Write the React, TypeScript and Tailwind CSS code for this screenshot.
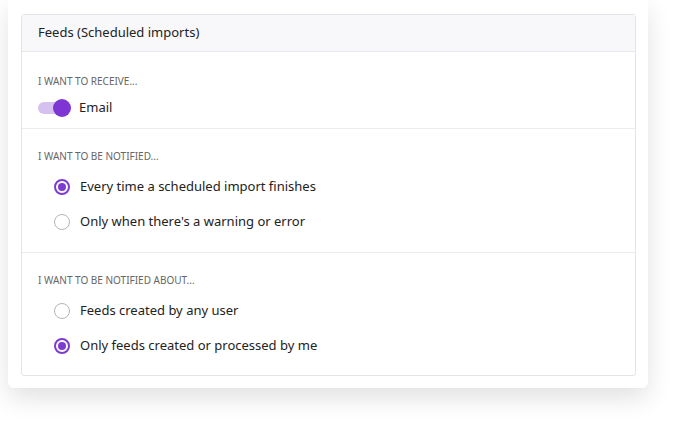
import React from 'react';

function Radio({ checked, label }: { checked: boolean; label: string }) {
  return (
    <div className="flex items-center h-[35px] pl-[16px]">
      {checked ? (
        <span className="w-[16px] h-[16px] rounded-full border-2 border-[#7e3bd0] flex items-center justify-center">
          <span className="w-[8px] h-[8px] rounded-full bg-[#7e3bd0]" />
        </span>
      ) : (
        <span className="w-[16px] h-[16px] rounded-full border border-[#b5b5b5]" />
      )}
      <span className="ml-[10px] text-[13px] text-[#222]">{label}</span>
    </div>
  );
}

export default function App() {
  return (
    <div className="w-[688px] h-[421px] bg-white relative" style={{ fontFamily: '"Noto Sans", sans-serif' }}>
      <div className="absolute left-[8px] top-0 w-[640px] h-[388px] bg-white shadow-[0_10px_25px_rgba(0,0,0,0.12)] rounded-b-md" />
      <div className="absolute left-[21px] top-[14px] w-[615px] border border-[#e4e4e8] rounded-[3px] bg-white">
        <div className="h-[37px] bg-[#f8f8fa] border-b border-[#e8e8ec] flex items-center px-[16px] text-[13px] text-[#222]">
          Feeds (Scheduled imports)
        </div>
        <div className="h-[77px] border-b border-[#ececef] px-[16px] pt-[24px]">
          <div className="text-[10px] text-[#666] uppercase leading-none">I want to receive...</div>
          <div className="flex items-center mt-[12px]">
            <span className="relative w-[33px] h-[18px] flex items-center">
              <span className="absolute left-0 w-[28px] h-[12px] rounded-full bg-[#d6c0ef]" />
              <span className="absolute right-0 w-[18px] h-[18px] rounded-full bg-[#7e35d3]" />
            </span>
            <span className="ml-[8px] text-[13px] text-[#222]">Email</span>
          </div>
        </div>
        <div className="h-[124px] border-b border-[#ececef] px-[16px] pt-[22px]">
          <div className="text-[10px] text-[#666] uppercase leading-none">I want to be notified...</div>
          <div className="mt-[8px]">
            <Radio checked label="Every time a scheduled import finishes" />
            <Radio checked={false} label="Only when there's a warning or error" />
          </div>
        </div>
        <div className="h-[122px] px-[16px] pt-[22px]">
          <div className="text-[10px] text-[#666] uppercase leading-none">I want to be notified about...</div>
          <div className="mt-[8px]">
            <Radio checked={false} label="Feeds created by any user" />
            <Radio checked label="Only feeds created or processed by me" />
          </div>
        </div>
      </div>
    </div>
  );
}
